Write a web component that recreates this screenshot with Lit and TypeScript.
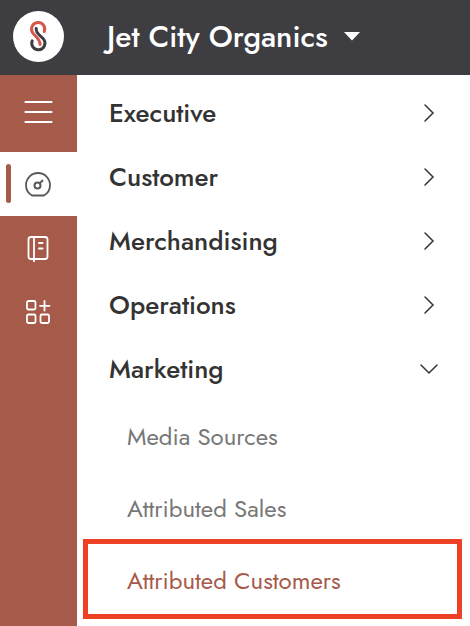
import { LitElement, html, css, svg, nothing } from "lit";
import { customElement, state } from "lit/decorators.js";
import { classMap } from "lit/directives/class-map.js";

interface Section {
  label: string;
  items: string[];
}

const sections: Section[] = [
  { label: "Executive", items: [] },
  { label: "Customer", items: [] },
  { label: "Merchandising", items: [] },
  { label: "Operations", items: [] },
  { label: "Marketing", items: ["Media Sources", "Attributed Sales", "Attributed Customers"] },
];

const gauge = svg`<path d="M8 25.500h12c3.500-2 6-6 6-10.500a12 12 0 0 0-24 0c0 4.500 2.500 8.500 6 10.500z" stroke-width="1.800"/><circle cx="13.500" cy="15.500" r="3" stroke-width="2"/><path d="M15.500 13.500l3-3" stroke-width="1.800"/>`;
const book = svg`<rect x="4.500" y="3" width="19" height="22" rx="2.500" stroke-width="1.800"/><path d="M10 3v24.500" stroke-width="1.800"/><path d="M15 9h3.500M15 14.500h3.500" stroke-width="2"/>`;
const apps = svg`<g stroke-width="1.800"><rect x="3" y="3" width="8.500" height="8.500" rx="1.500"/><rect x="3" y="16.500" width="8.500" height="8.500" rx="1.500"/><rect x="16.500" y="16.500" width="8.500" height="8.500" rx="1.500"/><path d="M20.500 3v9.500M16 7.800h9.500"/></g>`;

const rail = [
  { label: "Dashboards", icon: gauge, active: true },
  { label: "Library", icon: book, active: false },
  { label: "Apps", icon: apps, active: false },
];

@customElement("app-root")
export class AppRoot extends LitElement {
  static styles = css`
    :host {
      display: flex;
      flex-direction: column;
      min-height: 100vh;
      background: #fff;
      color: #333;
      font-family: Futura, "Futura PT", Jost, Lato, sans-serif;
    }
    * { box-sizing: border-box; }
    button {
      border: 0;
      margin: 0;
      padding: 0;
      background: none;
      color: inherit;
      font: inherit;
      cursor: pointer;
    }
    svg { display: block; fill: none; stroke: currentColor; }
    ul { list-style: none; margin: 0; padding: 0; }
    header {
      display: flex;
      align-items: center;
      gap: 43px;
      height: 75px;
      padding: 0 13px 2px;
      background: #3e3d42;
      color: #fff;
    }
    .logo { flex: none; }
    .account {
      display: flex;
      align-items: center;
      gap: 16px;
      font-size: 30px;
      font-weight: 500;
      line-height: 40px;
      white-space: nowrap;
    }
    .caret { fill: currentColor; stroke: none; }
    .body { display: flex; flex: 1; }
    .rail {
      flex: none;
      width: 77px;
      background: #a65a4a;
      color: #fff;
    }
    .rail button {
      position: relative;
      display: grid;
      place-items: center;
      width: 100%;
      height: 64px;
      padding-right: 2px;
    }
    .rail .menu { height: 77px; padding: 0 0 4px; }
    .rail .active { background: #fff; color: #58585a; }
    .rail .active::before {
      content: "";
      position: absolute;
      left: 6px;
      top: 12px;
      width: 5px;
      height: 39px;
      border-radius: 3px;
      background: #a65a4a;
    }
    .nav { flex: 1; min-width: 0; padding: 7px 0; }
    .section {
      display: flex;
      align-items: center;
      justify-content: space-between;
      width: 100%;
      height: 64px;
      padding: 0 31px 2px 32px;
      font-size: 26px;
      font-weight: 500;
      text-align: left;
    }
    .item {
      position: relative;
      display: flex;
      align-items: center;
      height: 72px;
      padding: 0 50px 4px;
      color: #777;
      font-size: 24px;
      text-decoration: none;
    }
    .current { color: #a65a4a; }
    .current::after {
      content: "";
      position: absolute;
      inset: -7px 8px -1px 6px;
      border: 5px solid #ed4024;
    }
  `;

  @state() private open = "Marketing";

  private toggle(label: string) {
    this.open = this.open === label ? "" : label;
  }

  private chevron(down: boolean) {
    return html`<svg width="20" height="20" viewBox="0 0 20 20" stroke-width="1.500" stroke-linecap="round" aria-hidden="true">
      <path d=${down ? "M2 6l8 8 8-8" : "M6 2l8 8-8 8"} />
    </svg>`;
  }

  render() {
    return html`
      <header>
        <svg class="logo" width="51" height="51" viewBox="0 0 51 51" role="img" aria-label="Logo">
          <circle cx="25.500" cy="25.500" r="25.500" fill="#fff" stroke="none" />
          <g stroke-width="3" stroke-linecap="round">
            <path stroke="#d4574a" d="M31.300 20.500A6.600 6.600 0 1 0 19.500 21.500C21.500 25 27.500 28 27 33.500" />
            <path stroke="#3e3d42" d="M19.200 29.800A6.600 6.600 0 1 0 31 28.800C29 25.300 22.500 23 23.200 17.500" />
          </g>
        </svg>
        <button class="account" aria-haspopup="true">
          Jet City Organics
          <svg class="caret" width="16" height="9" viewBox="0 0 16 9" aria-hidden="true"><path d="M0 0h16L8 8.500z" /></svg>
        </button>
      </header>
      <div class="body">
        <div class="rail">
          <button class="menu" aria-label="Menu">
            <svg width="29" height="24" viewBox="0 0 29 24" stroke-width="2.200" stroke-linecap="round">
              <path d="M1.500 2h26M1.500 12h26M1.500 22h26" />
            </svg>
          </button>
          ${rail.map(
            (r) => html`<button class=${classMap({ active: r.active })} aria-label=${r.label}>
              <svg width="28" height="28" viewBox="0 0 28 28" stroke-linecap="round" stroke-linejoin="round">${r.icon}</svg>
            </button>`
          )}
        </div>
        <nav class="nav">
          <ul>
            ${sections.map((s) => {
              const expanded = s.label === this.open;
              return html`<li>
                <button class="section" aria-expanded=${expanded} @click=${() => this.toggle(s.label)}>
                  ${s.label}${this.chevron(expanded)}
                </button>
                ${expanded && s.items.length
                  ? html`<ul>
                      ${s.items.map((label) => {
                        const current = label === "Attributed Customers";
                        return html`<li>
                          <a href="#" class=${classMap({ item: true, current })} aria-current=${current ? "page" : nothing}>${label}</a>
                        </li>`;
                      })}
                    </ul>`
                  : nothing}
              </li>`;
            })}
          </ul>
        </nav>
      </div>
    `;
  }
}
